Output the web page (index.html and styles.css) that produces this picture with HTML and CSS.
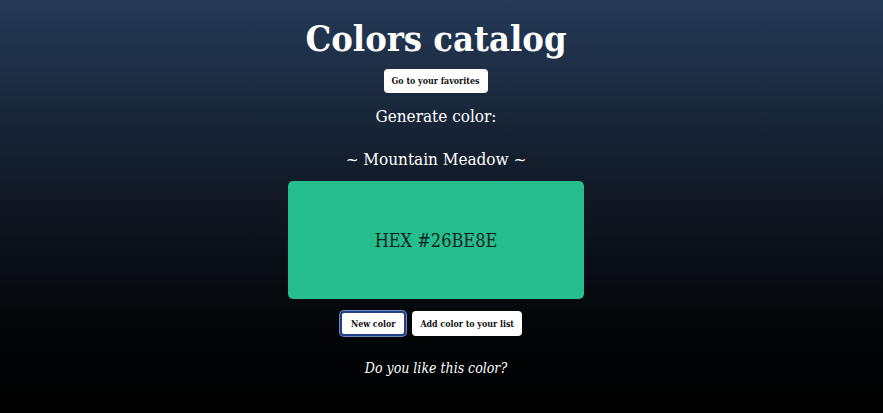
FILE: index.html
```html
<!DOCTYPE html>
<html>
<head>
<meta charset="utf-8">
<link rel="stylesheet" href="styles.css">
</head>
<body>
<main class="app">
  <h1 class="title">Colors catalog</h1>
  <button class="btn btn-fav">Go to your favorites</button>
  <h2 class="subtitle">Generate color:</h2>
  <h2 class="name">~ Mountain Meadow ~</h2>
  <div class="swatch" style="background:#26BE8E">
    <span class="hex">HEX #26BE8E</span>
  </div>
  <div class="actions">
    <button class="btn btn-focus">New color</button>
    <button class="btn btn-add">Add color to your list</button>
  </div>
  <p class="question">Do you like this color?</p>
</main>
</body>
</html>
```
FILE: styles.css
```css
html, body {
  margin: 0;
  height: 100%;
}
body {
  background: linear-gradient(180deg, #253a57 0%, #111a27 45%, #030507 80%, #000 100%);
  font-family: "DejaVu Serif Condensed", "DejaVu Serif", Georgia, serif;
  color: #fff;
}
.app {
  display: flex;
  flex-direction: column;
  align-items: center;
  padding-right: 11px;
}
.title {
  margin: 14px 0 0;
  font-size: 36px;
  line-height: 48px;
  font-weight: bold;
}
.btn {
  font-family: "DejaVu Serif Condensed", "DejaVu Serif", Georgia, serif;
  font-weight: bold;
  font-size: 8.8px;
  color: #111;
  background: #fff;
  border: 2px solid #fff;
  border-radius: 4px;
  padding: 0 8px;
  height: 24px;
}
.btn-fav {
  margin-top: 7px;
  padding: 0 7px 0 6px;
}
.subtitle {
  margin: 11px 0 0;
  font-size: 17px;
  font-weight: normal;
  line-height: 24px;
}
.name {
  margin: 19px 0 0;
  font-size: 17px;
  font-weight: normal;
  line-height: 24px;
}
.swatch {
  margin-top: 10px;
  width: 296px;
  height: 118px;
  border-radius: 5px;
  display: flex;
  align-items: center;
  justify-content: center;
}
.hex {
  color: #10261f;
  font-size: 18px;
}
.actions {
  margin: 12px 10px 0 0;
  display: flex;
  gap: 6px;
}
.actions .btn {
  height: 25px;
}
.actions .btn-focus {
  padding: 0 9px;
}
.actions .btn-add {
  padding: 0 6px;
}
.btn-focus {
  border-color: #1f3f86;
  box-shadow: 0 0 0 1px #6f86b8;
}
.question {
  margin: 24px 0 0;
  font-style: italic;
  font-size: 14px;
}
```
